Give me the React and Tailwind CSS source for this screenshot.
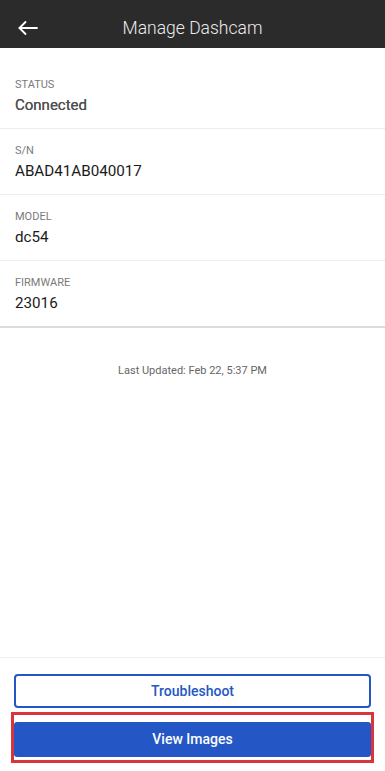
import React from 'react';

const rows = [
    { label: 'STATUS', value: 'Connected', muted: true },
    { label: 'S/N', value: 'ABAD41AB040017' },
    { label: 'MODEL', value: 'dc54' },
    { label: 'FIRMWARE', value: '23016', last: true },
];

function BackArrow() {
    return (
        <svg width="20" height="14" viewBox="0 0 20 14" fill="none" stroke="white" strokeWidth="1.8" strokeLinecap="round" strokeLinejoin="round">
            <path d="M19 7H1.5" />
            <path d="M7.5 1L1.5 7l6 6" />
        </svg>
    );
}

export default function App() {
    return (
        <div className="h-[771px] w-full flex flex-col bg-white" style={{ fontFamily: 'Roboto, "Liberation Sans", sans-serif' }}>
            {/* top bar */}
            <div className="h-12 shrink-0 bg-[#2b2b2b] flex items-center pt-[8px] relative">
                <button className="absolute left-[18px] top-[21px] flex">
                    <BackArrow />
                </button>
                <h1 className="w-full text-center text-[#ececec] text-[17.5px] font-light">Manage Dashcam</h1>
            </div>

            <div className="pt-[15px]">
                {rows.map((row) => (
                    <div
                        key={row.label}
                        className={
                            row.last
                                ? 'px-[15px] pt-[14px] pb-[13px] border-b-[2px] border-[#dcdcdc]'
                                : 'px-[15px] pt-[14px] pb-[13px] border-b border-[#ededed]'
                        }
                    >
                        <p className="text-[11px] leading-4 text-[#7a7a7a]">{row.label}</p>
                        <p
                            className={
                                row.muted
                                    ? 'mt-[2px] text-[15px] leading-5 text-[#505050] [text-shadow:0_0_0.3px_#505050]'
                                    : 'mt-[2px] text-[15.2px] leading-5 text-[#1a1a1a]'
                            }
                        >
                            {row.value}
                        </p>
                    </div>
                ))}
            </div>

            <p className="mt-[35px] text-center text-[11px] leading-4 text-[#666666]">Last Updated: Feb 22, 5:37 PM</p>

            <div className="flex-1" />

            {/* actions */}
            <div className="border-t border-[#efefef] px-[14px] pt-[16px] pb-[8px]">
                <button className="w-full h-[34px] rounded-[4px] border-[2px] border-[#2457c5] bg-white text-[#2457c5] text-[14px] font-medium">
                    Troubleshoot
                </button>
                <div className="mt-[4px] -mx-[3px] border-[3px] border-[#d9333b] pt-[7px] pb-[3px]">
                    <button className="w-full h-[35px] rounded-[3px] bg-[#2457c5] text-white text-[14px] font-medium">
                        View Images
                    </button>
                </div>
            </div>
        </div>
    );
}
